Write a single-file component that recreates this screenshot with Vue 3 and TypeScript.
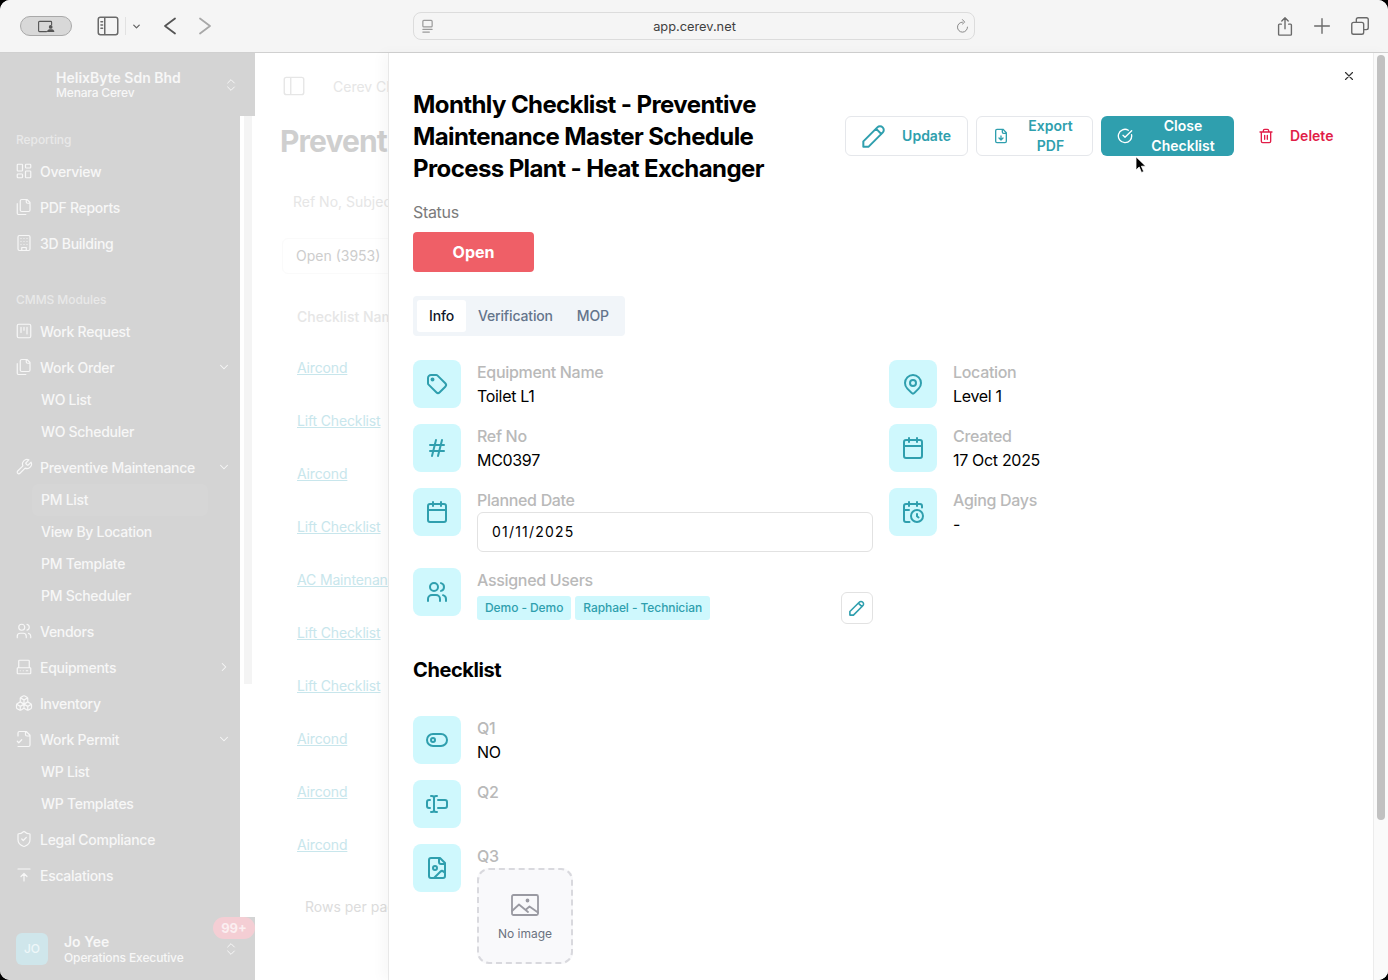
<script setup lang="ts">
type NavItem = {
  label: string
  icon?: string
  sub?: boolean
  active?: boolean
  chevron?: 'down' | 'right'
}

const icons: Record<string, string> = {
  tag: 'M6.5 7.5a1 1 0 1 0 2 0a1 1 0 1 0 -2 0M3 6v5.172a2 2 0 0 0 .586 1.414l7.71 7.71a2.41 2.41 0 0 0 3.408 0l5.592 -5.592a2.41 2.41 0 0 0 0 -3.408l-7.71 -7.71a2 2 0 0 0 -1.414 -.586h-5.172a3 3 0 0 0 -3 3z',
  hash: 'M5 9h14M5 15h14M11 4l-4 16M17 4l-4 16',
  calendar: 'M5 4h14a2 2 0 0 1 2 2v14a2 2 0 0 1-2 2H5a2 2 0 0 1-2-2V6a2 2 0 0 1 2-2zM16 2v4M8 2v4M3 10h18',
  users: 'M5 7a4 4 0 1 0 8 0a4 4 0 1 0 -8 0M3 21v-2a4 4 0 0 1 4 -4h4a4 4 0 0 1 4 4v2M16 3.13a4 4 0 0 1 0 7.75M21 21v-2a4 4 0 0 0 -3 -3.85',
  pin: 'M9 11a3 3 0 1 0 6 0a3 3 0 0 0 -6 0M17.657 16.657l-4.243 4.243a2 2 0 0 1 -2.827 0l-4.244 -4.243a8 8 0 1 1 11.314 0z',
  calendarClock: 'M21 7.5V6a2 2 0 0 0-2-2H5a2 2 0 0 0-2 2v14a2 2 0 0 0 2 2h3.5M16 2v4M8 2v4M3 10h5M17.5 17.5 16 16.3V14M10 16a6 6 0 1 0 12 0a6 6 0 1 0-12 0',
  toggle: 'M8 6h8a6 6 0 0 1 0 12H8A6 6 0 0 1 8 6zM6 12a2 2 0 1 0 4 0a2 2 0 1 0-4 0',
  textCursor: 'M12 20h-1a2 2 0 0 1-2-2 2 2 0 0 1-2 2H6M13 8h7a2 2 0 0 1 2 2v4a2 2 0 0 1-2 2h-7M5 16H4a2 2 0 0 1-2-2v-4a2 2 0 0 1 2-2h1M6 4h1a2 2 0 0 1 2 2 2 2 0 0 1 2-2h1M9 6v12',
  fileImage: 'M15 2H6a2 2 0 0 0-2 2v16a2 2 0 0 0 2 2h12a2 2 0 0 0 2-2V7ZM14 2v4a2 2 0 0 0 2 2h4M8 12a2 2 0 1 0 4 0a2 2 0 1 0-4 0M20 17l-1.296-1.296a2.41 2.41 0 0 0-3.408 0L9 22',
  pencil: 'M4 20h4l10.5 -10.5a2.828 2.828 0 1 0 -4 -4l-10.5 10.5v4M13.5 6.5l4 4',
  fileDown: 'M15 2H6a2 2 0 0 0-2 2v16a2 2 0 0 0 2 2h12a2 2 0 0 0 2-2V7ZM14 2v4a2 2 0 0 0 2 2h4M12 18v-6M9 15l3 3 3-3',
  circleCheck: 'M21.801 10A10 10 0 1 1 17 3.335M9 11l3 3L22 4',
  trash: 'M3 6h18M19 6v14c0 1-1 2-2 2H7c-1 0-2-1-2-2V6M8 6V4c0-1 1-2 2-2h4c1 0 2 1 2 2v2M10 11v6M14 11v6',
  close: 'M18 6 6 18M6 6l12 12',
  upDown: 'M7 15l5 5 5-5M7 9l5-5 5 5',
  down: 'M6 9l6 6 6-6',
  right: 'M9 6l6 6-6 6',
  dashboard: 'M4 3h5a1 1 0 0 1 1 1v7a1 1 0 0 1-1 1H4a1 1 0 0 1-1-1V4a1 1 0 0 1 1-1zM15 3h5a1 1 0 0 1 1 1v3a1 1 0 0 1-1 1h-5a1 1 0 0 1-1-1V4a1 1 0 0 1 1-1zM15 12h5a1 1 0 0 1 1 1v7a1 1 0 0 1-1 1h-5a1 1 0 0 1-1-1v-7a1 1 0 0 1 1-1zM4 16h5a1 1 0 0 1 1 1v3a1 1 0 0 1-1 1H4a1 1 0 0 1-1-1v-3a1 1 0 0 1 1-1z',
  files: 'M20 7h-3a2 2 0 0 1-2-2V2M9 18a2 2 0 0 1-2-2V4a2 2 0 0 1 2-2h7l4 4v10a2 2 0 0 1-2 2ZM3 7.6v12.8A1.6 1.6 0 0 0 4.6 22h9.8',
  building: 'M6 2h12a2 2 0 0 1 2 2v16a2 2 0 0 1-2 2H6a2 2 0 0 1-2-2V4a2 2 0 0 1 2-2zM9 22v-4h6v4M8 6h.01M16 6h.01M12 6h.01M12 10h.01M12 14h.01M16 10h.01M16 14h.01M8 10h.01M8 14h.01',
  kanban: 'M5 3h14a2 2 0 0 1 2 2v14a2 2 0 0 1-2 2H5a2 2 0 0 1-2-2V5a2 2 0 0 1 2-2zM8 7v7M12 7v4M16 7v9',
  wrench: 'M14.7 6.3a1 1 0 0 0 0 1.4l1.6 1.6a1 1 0 0 0 1.4 0l3.77-3.77a6 6 0 0 1-7.94 7.94l-6.91 6.91a2.12 2.12 0 0 1-3-3l6.91-6.91a6 6 0 0 1 7.94-7.94l-3.76 3.76z',
  server: 'M6 3h12a1 1 0 0 1 1 1v9H5V4a1 1 0 0 1 1-1zM4 13h16a1 1 0 0 1 1 1v6a1 1 0 0 1-1 1H4a1 1 0 0 1-1-1v-6a1 1 0 0 1 1-1zM7 17h.01M11 17h.01M15 17h2',
  boxes: 'M2.97 12.92A2 2 0 0 0 2 14.63v3.24a2 2 0 0 0 .97 1.71l3 1.8a2 2 0 0 0 2.06 0L12 19v-5.5l-5-3-4.03 2.42ZM7 16.5l-4.74-2.85M7 16.5l5-3M7 16.5v5.17M12 13.5V19l3.97 2.38a2 2 0 0 0 2.06 0l3-1.8a2 2 0 0 0 .97-1.71v-3.24a2 2 0 0 0-.97-1.71L17 10.5l-5 3ZM17 16.5l-5-3M17 16.5l4.74-2.85M17 16.5v5.17M7.97 4.42A2 2 0 0 0 7 6.13v4.37l5 3 5-3V6.13a2 2 0 0 0-.97-1.71l-3-1.8a2 2 0 0 0-2.06 0l-3 1.8ZM12 8 7.26 5.15M12 8l4.74-2.85M12 13.5V8',
  fileCheck: 'M4 22h14a2 2 0 0 0 2-2V7l-5-5H6a2 2 0 0 0-2 2v4M14 2v4a2 2 0 0 0 2 2h4M3 15l2 2 4-4',
  shield: 'M20 13c0 5-3.5 7.5-7.66 8.95a1 1 0 0 1-.67-.01C7.5 20.5 4 18 4 13V6a1 1 0 0 1 1-1c2 0 4.5-1.2 6.24-2.72a1.17 1.17 0 0 1 1.52 0C14.51 3.81 17 5 19 5a1 1 0 0 1 1 1zM9 12l2 2 4-4',
  arrowTop: 'M12 10v10M12 10l4 4M12 10l-4 4M4 4h16',
  sidebar: 'M5 4h14a2 2 0 0 1 2 2v12a2 2 0 0 1-2 2H5a2 2 0 0 1-2-2V6a2 2 0 0 1 2-2zM9 4v16',
  share: 'M12 15V3M8.5 6.5 12 3l3.5 3.5M8 10H6a1 1 0 0 0-1 1v10a1 1 0 0 0 1 1h12a1 1 0 0 0 1-1V11a1 1 0 0 0-1-1h-2',
  plus: 'M12 4v16M4 12h16',
  tabs: 'M8 8V5a2 2 0 0 1 2-2h9a2 2 0 0 1 2 2v9a2 2 0 0 1-2 2h-3M5 8h9a2 2 0 0 1 2 2v9a2 2 0 0 1-2 2H5a2 2 0 0 1-2-2v-9a2 2 0 0 1 2-2z',
  back: 'M17 4.5 7 12l10 7.5',
  forward: 'M7 4.5 17 12 7 19.5',
  reload: 'M12 5a8 8 0 1 0 8 8M12 1l3.5 4L12 8',
}

const reporting: NavItem[] = [
  { label: 'Overview', icon: 'dashboard' },
  { label: 'PDF Reports', icon: 'files' },
  { label: '3D Building', icon: 'building' },
]

const modules: NavItem[] = [
  { label: 'Work Request', icon: 'kanban' },
  { label: 'Work Order', icon: 'files', chevron: 'down' },
  { label: 'WO List', sub: true },
  { label: 'WO Scheduler', sub: true },
  { label: 'Preventive Maintenance', icon: 'wrench', chevron: 'down' },
  { label: 'PM List', sub: true, active: true },
  { label: 'View By Location', sub: true },
  { label: 'PM Template', sub: true },
  { label: 'PM Scheduler', sub: true },
  { label: 'Vendors', icon: 'users' },
  { label: 'Equipments', icon: 'server', chevron: 'right' },
  { label: 'Inventory', icon: 'boxes' },
  { label: 'Work Permit', icon: 'fileCheck', chevron: 'down' },
  { label: 'WP List', sub: true },
  { label: 'WP Templates', sub: true },
  { label: 'Legal Compliance', icon: 'shield' },
  { label: 'Escalations', icon: 'arrowTop' },
]

const bgRows = [
  'Aircond',
  'Lift Checklist',
  'Aircond',
  'Lift Checklist',
  'AC Maintenance',
  'Lift Checklist',
  'Lift Checklist',
  'Aircond',
  'Aircond',
  'Aircond',
]

const leftInfo = [
  { label: 'Equipment Name', value: 'Toilet L1', icon: 'tag' },
  { label: 'Ref No', value: 'MC0397', icon: 'hash' },
]

const rightInfo = [
  { label: 'Location', value: 'Level 1', icon: 'pin' },
  { label: 'Created', value: '17 Oct 2025', icon: 'calendar' },
  { label: 'Aging Days', value: '-', icon: 'calendarClock' },
]
</script>

<template>
  <div class="window">
    <header class="toolbar">
      <div class="toolbar-left">
        <div class="profile-pill">
          <svg viewBox="0 0 20 14" class="pill-icon">
            <path d="M10 12.5H2.5a1 1 0 0 1-1-1v-9a1 1 0 0 1 1-1h12a1 1 0 0 1 1 1V5" fill="none" stroke="#555" stroke-width="1.2" />
            <circle cx="14.5" cy="7.5" r="2" fill="#555" />
            <path d="M10.5 13c0-2.4 1.8-3 4-3s4 .6 4 3z" fill="#555" />
          </svg>
        </div>
        <svg class="tb-icon sidebar-toggle" viewBox="0 0 24 24">
          <path :d="icons.sidebar" />
          <path d="M5.5 8h1.5M5.5 11h1.5M5.5 14h1.5" />
        </svg>
        <span class="tb-divider"></span>
        <svg class="tb-chev" viewBox="0 0 24 24"><path :d="icons.down" /></svg>
        <svg class="tb-nav" viewBox="0 0 24 24"><path :d="icons.back" /></svg>
        <svg class="tb-nav tb-nav--off" viewBox="0 0 24 24"><path :d="icons.forward" /></svg>
      </div>
      <div class="url-bar">
        <svg class="url-icon" viewBox="0 0 14 16">
          <path d="M3 1.5h8a1 1 0 0 1 1 1v5a1 1 0 0 1-1 1H3a1 1 0 0 1-1-1v-5a1 1 0 0 1 1-1zM2 11h10M2 14h7" />
        </svg>
        <span class="url-text">app.cerev.net</span>
        <svg class="url-reload" viewBox="0 0 24 24"><path :d="icons.reload" /></svg>
      </div>
      <div class="toolbar-right">
        <svg class="tb-action tb-action--share" viewBox="0 0 24 24"><path :d="icons.share" /></svg>
        <svg class="tb-action" viewBox="0 0 24 24"><path :d="icons.plus" /></svg>
        <svg class="tb-action" viewBox="0 0 24 24"><path :d="icons.tabs" /></svg>
      </div>
    </header>

    <div class="body">
      <aside class="sidebar">
        <div class="org">
          <div class="org-copy">
            <strong>HelixByte Sdn Bhd</strong>
            <span>Menara Cerev</span>
          </div>
          <svg class="updown" viewBox="0 0 24 24"><path :d="icons.upDown" /></svg>
        </div>

        <div class="side-mid">
          <nav class="nav">
            <p class="nav-group">Reporting</p>
            <a v-for="item in reporting" :key="item.label" class="nav-item">
              <svg class="nav-icon" viewBox="0 0 24 24"><path :d="icons[item.icon!]" /></svg>
              {{ item.label }}
            </a>
            <p class="nav-group nav-group--gap">CMMS Modules</p>
            <a
              v-for="item in modules"
              :key="item.label"
              :class="['nav-item', { 'nav-item--sub': item.sub, 'nav-item--active': item.active }]"
            >
              <svg v-if="item.icon" class="nav-icon" viewBox="0 0 24 24"><path :d="icons[item.icon]" /></svg>
              <span class="nav-label">{{ item.label }}</span>
              <svg v-if="item.chevron" class="nav-chev" viewBox="0 0 24 24"><path :d="icons[item.chevron]" /></svg>
            </a>
          </nav>
          <div class="side-track"><div class="side-thumb"></div></div>
        </div>

        <div class="user">
          <div class="avatar">JO</div>
          <div class="user-copy">
            <strong>Jo Yee</strong>
            <span>Operations Executive</span>
          </div>
          <svg class="updown" viewBox="0 0 24 24"><path :d="icons.upDown" /></svg>
          <span class="badge">99+</span>
        </div>
      </aside>

      <main class="behind">
        <div class="crumbs">
          <svg class="crumb-icon" viewBox="0 0 24 24"><path :d="icons.sidebar" /></svg>
          <span>Cerev Checklist</span>
        </div>
        <h1 class="behind-title">Preventive Maintenance</h1>
        <p class="behind-search">Ref No, Subject</p>
        <div class="behind-tab">Open (3953)</div>
        <p class="behind-head">Checklist Name</p>
        <a v-for="(row, i) in bgRows" :key="i" class="behind-row">{{ row }}</a>
        <p class="behind-foot">Rows per page</p>
      </main>

      <section class="drawer">
        <div class="drawer-scroll">
          <svg class="drawer-close" viewBox="0 0 24 24"><path :d="icons.close" /></svg>

          <div class="head">
            <h2 class="title">Monthly Checklist - Preventive Maintenance Master Schedule Process Plant - Heat Exchanger</h2>
            <div class="actions">
              <button class="btn btn--outline">
                <svg class="btn-icon-lg" viewBox="3 3 18 18"><path :d="icons.pencil" /></svg>
                <span>Update</span>
              </button>
              <button class="btn btn--outline btn--export">
                <svg viewBox="0 0 24 24"><path :d="icons.fileDown" /></svg>
                <span>Export PDF</span>
              </button>
              <button class="btn btn--solid">
                <svg viewBox="0 0 24 24"><path :d="icons.circleCheck" /></svg>
                <span>Close Checklist</span>
              </button>
              <button class="btn btn--danger">
                <svg viewBox="0 0 24 24"><path :d="icons.trash" /></svg>
                <span>Delete</span>
              </button>
            </div>
          </div>

          <p class="status-label">Status</p>
          <div class="status">Open</div>

          <div class="tabs">
            <span class="tab tab--active">Info</span>
            <span class="tab">Verification</span>
            <span class="tab">MOP</span>
          </div>

          <div class="info-grid">
            <div class="info-col">
              <div v-for="row in leftInfo" :key="row.label" class="info">
                <div class="info-icon"><svg viewBox="0 0 24 24"><path :d="icons[row.icon]" /></svg></div>
                <div class="info-copy">
                  <div class="info-label">{{ row.label }}</div>
                  <div class="info-value">{{ row.value }}</div>
                </div>
              </div>
              <div class="info">
                <div class="info-icon"><svg viewBox="0 0 24 24"><path :d="icons.calendar" /></svg></div>
                <div class="info-copy">
                  <div class="info-label">Planned Date</div>
                  <input class="date-input" type="text" value="01/11/2025" readonly />
                </div>
              </div>
              <div class="info">
                <div class="info-icon"><svg viewBox="0 0 24 24"><path :d="icons.users" /></svg></div>
                <div class="info-copy">
                  <div class="info-label">Assigned Users</div>
                  <div class="chips-row">
                    <div class="chips">
                      <span class="chip">Demo - Demo</span>
                      <span class="chip">Raphael - Technician</span>
                    </div>
                    <button class="edit-btn">
                      <svg viewBox="3 3 18 18"><path :d="icons.pencil" /></svg>
                    </button>
                  </div>
                </div>
              </div>
            </div>
            <div class="info-col">
              <div v-for="row in rightInfo" :key="row.label" class="info">
                <div class="info-icon"><svg viewBox="0 0 24 24"><path :d="icons[row.icon]" /></svg></div>
                <div class="info-copy">
                  <div class="info-label">{{ row.label }}</div>
                  <div class="info-value">{{ row.value }}</div>
                </div>
              </div>
            </div>
          </div>

          <h3 class="section-title">Checklist</h3>

          <div class="questions">
            <div class="info">
              <div class="info-icon"><svg viewBox="0 0 24 24"><path :d="icons.toggle" /></svg></div>
              <div class="info-copy">
                <div class="info-label">Q1</div>
                <div class="info-value">NO</div>
              </div>
            </div>
            <div class="info">
              <div class="info-icon"><svg viewBox="0 0 24 24"><path :d="icons.textCursor" /></svg></div>
              <div class="info-copy">
                <div class="info-label">Q2</div>
              </div>
            </div>
            <div class="info">
              <div class="info-icon"><svg viewBox="0 0 24 24"><path :d="icons.fileImage" /></svg></div>
              <div class="info-copy">
                <div class="info-label">Q3</div>
                <div class="no-image">
                  <svg viewBox="0 0 28 22">
                    <path d="M2.5 1h23a1.5 1.5 0 0 1 1.5 1.5v17a1.5 1.5 0 0 1-1.5 1.5h-23A1.5 1.5 0 0 1 1 19.5v-17A1.5 1.5 0 0 1 2.5 1z" />
                    <path d="M1 17l7-6.5 9 7.5M15 15.5l3.5-3 8.5 6" />
                    <circle cx="16.5" cy="6.5" r="1" />
                  </svg>
                  <span>No image</span>
                </div>
              </div>
            </div>
          </div>
        </div>
        <div class="drawer-track"><div class="drawer-thumb"></div></div>
      </section>
    </div>

    <svg class="cursor" viewBox="0 0 12 18">
      <path d="M1 1v13l3.2-3 2.3 5.5 2.2-1-2.3-5.3H10.5z" fill="#000" stroke="#fff" stroke-width="0.8" />
    </svg>
  </div>
</template>

<style>
html,
body {
  margin: 0;
  height: 100%;
  overflow: hidden;
  background: #000;
}
</style>

<style scoped>
.window {
  position: relative;
  display: flex;
  flex-direction: column;
  width: 1388px;
  height: 980px;
  overflow: hidden;
  border-radius: 10px;
  background: #fff;
  color: #000;
  font-family: Inter, 'Liberation Sans', sans-serif;
  box-sizing: border-box;
}

svg {
  fill: none;
  stroke: currentColor;
  stroke-width: 2;
  stroke-linecap: round;
  stroke-linejoin: round;
  flex: 0 0 auto;
}

/* browser chrome */
.toolbar {
  flex: 0 0 auto;
  display: flex;
  align-items: center;
  height: 52px;
  background: #f5f5f5;
  border-bottom: 1px solid #d0d0d0;
}

.toolbar-left {
  display: flex;
  align-items: center;
  width: 413px;
  padding-left: 20px;
  box-sizing: border-box;
}

.profile-pill {
  display: flex;
  align-items: center;
  justify-content: center;
  width: 52px;
  height: 20px;
  border: 1px solid #a9a9a9;
  border-radius: 10px;
  background: #d8d8d8;
  box-sizing: border-box;
}

.pill-icon {
  width: 19px;
  height: 13px;
  stroke: none;
}

.tb-icon {
  width: 26px;
  height: 26px;
  color: #6a6a6a;
  stroke-width: 1.4;
}

.sidebar-toggle {
  margin-left: 23px;
}

.tb-divider {
  width: 1px;
  height: 18px;
  margin-left: 4px;
  background: #e2e2e2;
}

.tb-chev {
  width: 11px;
  height: 11px;
  margin-left: 5px;
  color: #666;
  stroke-width: 3;
}

.tb-nav {
  width: 24px;
  height: 24px;
  margin-left: 16px;
  color: #555;
  stroke-width: 1.8;
}

.tb-nav--off {
  margin-left: 11px;
  color: #a8a8a8;
}

.url-bar {
  display: flex;
  align-items: center;
  justify-content: space-between;
  width: 562px;
  height: 28px;
  padding: 0 4px 0 7px;
  border: 1px solid #dcdcdc;
  border-radius: 8px;
  background: #f5f5f5;
  box-sizing: border-box;
}

.url-icon {
  width: 13px;
  height: 15px;
  color: #9a9a9a;
  stroke-width: 1.3;
}

.url-text {
  padding-top: 1px;
  font-size: 12.8px;
  color: #3f3f3f;
}

.url-reload {
  width: 15px;
  height: 15px;
  color: #8a8a8a;
  stroke-width: 1.6;
}

.toolbar-right {
  flex: 1;
  display: flex;
  align-items: center;
  justify-content: flex-end;
  gap: 16px;
  padding-right: 17px;
}

.tb-action {
  width: 22px;
  height: 22px;
  color: #6a6a6a;
  stroke-width: 1.5;
}

.tb-action--share {
  margin-right: -1px;
}

/* page */
.body {
  flex: 1;
  display: flex;
  min-height: 0;
}

.sidebar {
  flex: 0 0 255px;
  display: flex;
  flex-direction: column;
  color: #f7f7f7;
}

.org {
  flex: 0 0 63px;
  display: flex;
  align-items: center;
  justify-content: space-between;
  padding: 0 16px 0 56px;
  background: #d4d4d4;
  box-sizing: border-box;
}

.org-copy {
  display: flex;
  flex-direction: column;
}

.org-copy strong {
  font-size: 14px;
  font-weight: 600;
  line-height: 16px;
}

.org-copy span {
  font-size: 12px;
  font-weight: 500;
  line-height: 14px;
  letter-spacing: -0.015em;
}

.updown {
  width: 16px;
  height: 16px;
  stroke-width: 1.5;
}

.side-mid {
  flex: 1;
  display: flex;
  min-height: 0;
}

.nav {
  flex: 0 0 240px;
  padding: 8px 8px 0;
  background: #d4d4d4;
  box-sizing: border-box;
}

.nav-group {
  margin: 0;
  padding-left: 8px;
  height: 32px;
  font-size: 12px;
  font-weight: 500;
  line-height: 32px;
  letter-spacing: -0.005em;
  color: #e9e9e9;
}

.nav-group--gap {
  margin-top: 24px;
}

.nav-item {
  display: flex;
  align-items: center;
  gap: 7px;
  height: 32px;
  margin-top: 4px;
  padding: 0 1px 2px 7px;
  font-size: 14px;
  font-weight: 500;
  letter-spacing: -0.02em;
  white-space: nowrap;
  box-sizing: border-box;
}

.nav-group + .nav-item {
  margin-top: 0;
}

.nav-item--sub {
  margin-top: 0;
  padding-left: 33px;
}

.nav-item--active {
  margin: 0 24px;
  padding-left: 9px;
  background: #d6d6d6;
  border-radius: 6px;
}

.nav-label {
  flex: 1;
}

.nav-icon {
  width: 18px;
  height: 18px;
  stroke-width: 1.6;
}

.nav-chev {
  width: 14px;
  height: 14px;
  stroke-width: 1.8;
}

.side-track {
  flex: 0 0 15px;
  padding-left: 4px;
  background: #fff;
  box-sizing: border-box;
}

.side-thumb {
  width: 8px;
  height: 568px;
  background: #f4f4f4;
}

.user {
  position: relative;
  flex: 0 0 63px;
  display: flex;
  align-items: center;
  gap: 16px;
  padding: 0 16px;
  background: #d4d4d4;
  box-sizing: border-box;
}

.avatar {
  flex: 0 0 32px;
  height: 32px;
  border-radius: 6px;
  background: #cfe6eb;
  font-size: 12px;
  font-weight: 500;
  line-height: 32px;
  text-align: center;
  color: #eef7f9;
}

.user-copy {
  flex: 1;
  display: flex;
  flex-direction: column;
  white-space: nowrap;
}

.user-copy strong {
  font-size: 14px;
  font-weight: 600;
  line-height: 17px;
}

.user-copy span {
  font-size: 12px;
  font-weight: 500;
  line-height: 15px;
  letter-spacing: -0.01em;
}

.badge {
  position: absolute;
  top: 0;
  right: 0;
  width: 42px;
  height: 22px;
  border-radius: 11px;
  background: #f4ced4;
  font-size: 13px;
  font-weight: 700;
  line-height: 22px;
  text-align: center;
  color: #fbeff1;
}

/* dimmed page behind the drawer */
.behind {
  flex: 0 0 133px;
  min-width: 0;
  padding-top: 23px;
  overflow: hidden;
  white-space: nowrap;
  background: #fff;
  font-size: 14px;
  color: #e6e6e6;
}

.crumbs {
  display: flex;
  align-items: center;
  gap: 26px;
  height: 20px;
  padding-left: 26px;
  font-size: 14px;
}

.crumb-icon {
  width: 26px;
  height: 26px;
  stroke-width: 1.3;
}

.behind-title {
  margin: 27px 0 0 25px;
  font-size: 30px;
  font-weight: 700;
  line-height: 36px;
  letter-spacing: -0.03em;
  color: #cfcfcf;
}

.behind-search {
  margin: 33px 0 0 38px;
  line-height: 20px;
}

.behind-tab {
  width: 120px;
  height: 36px;
  margin: 26px 0 0 27px;
  padding-left: 13px;
  border: 1px solid #fafafa;
  border-radius: 6px;
  line-height: 34px;
  color: #cdcdcd;
  box-sizing: border-box;
}

.behind-head {
  margin: 33px 0 0 42px;
  font-weight: 500;
  line-height: 20px;
}

.behind-row {
  display: block;
  height: 53px;
  margin-left: 42px;
  line-height: 20px;
  letter-spacing: -0.15px;
  text-decoration: underline;
  color: #c8e6ec;
}

.behind-head + .behind-row {
  margin-top: 31px;
}

.behind-foot {
  margin: 9px 0 0 50px;
  line-height: 20px;
  color: #dcdcdc;
}

/* drawer */
.drawer {
  flex: 0 0 1000px;
  display: flex;
  min-width: 0;
  border-left: 1px solid #e8e8e8;
  background: #fff;
  box-shadow: -6px 0 12px rgba(0, 0, 0, 0.03);
  box-sizing: border-box;
}

.drawer-scroll {
  position: relative;
  flex: 1;
  min-width: 0;
  padding: 36px 32px 0 24px;
  overflow: hidden;
  box-sizing: border-box;
}

.drawer-close {
  position: absolute;
  top: 16px;
  right: 17px;
  width: 14px;
  height: 14px;
  color: #333;
}

.head {
  display: flex;
  align-items: center;
  justify-content: space-between;
}

.title {
  width: 420px;
  margin: 0;
  font-size: 24px;
  font-weight: 700;
  line-height: 32px;
  letter-spacing: -0.025em;
}

.actions {
  display: flex;
  gap: 8px;
  margin-bottom: 2px;
}

.btn {
  display: flex;
  align-items: center;
  gap: 16px;
  height: 40px;
  padding: 0 16px;
  border: 1px solid transparent;
  border-radius: 6px;
  background: transparent;
  font: inherit;
  font-size: 14px;
  font-weight: 600;
  line-height: 20px;
  box-sizing: border-box;
}

.btn span {
  flex: 1;
  text-align: center;
}

.btn svg {
  width: 16px;
  height: 16px;
}

.btn svg.btn-icon-lg {
  width: 24px;
  height: 24px;
  stroke-width: 1.5;
}

.btn--outline {
  border-color: #e5e7eb;
  color: #2f9fae;
}

.btn--export {
  width: 117px;
}

.btn--solid {
  width: 133px;
  padding-left: 15px;
  background: #2f9fae;
  color: #fff;
}

.btn--danger {
  width: 99px;
  padding: 0 8px 0 15px;
  color: #e11d48;
}

.status-label {
  margin: 17px 0 10px;
  font-size: 16px;
  line-height: 20px;
  letter-spacing: -0.02em;
  color: #7b7b7b;
}

.status {
  width: 121px;
  height: 40px;
  border-radius: 4px;
  background: #ef5f67;
  font-size: 16px;
  font-weight: 700;
  line-height: 40px;
  text-align: center;
  color: #fff;
}

.tabs {
  display: flex;
  width: fit-content;
  height: 40px;
  margin-top: 24px;
  padding: 4px;
  border-radius: 4px;
  background: #f1f5f9;
  letter-spacing: -0.01em;
  box-sizing: border-box;
}

.tab {
  padding: 0 12px;
  font-size: 14px;
  font-weight: 500;
  line-height: 32px;
  color: #64748b;
}

.tab--active {
  border-radius: 3px;
  background: #fff;
  color: #0f172a;
}

.info-grid {
  display: grid;
  grid-template-columns: 460px 1fr;
  gap: 16px;
  margin-top: 24px;
}

.info-col,
.questions {
  display: flex;
  flex-direction: column;
  gap: 16px;
}

.info {
  display: flex;
  gap: 16px;
}

.info-icon {
  flex: 0 0 48px;
  display: flex;
  align-items: center;
  justify-content: center;
  height: 48px;
  border-radius: 8px;
  background: #cff8fd;
  color: #2f9fae;
}

.info-icon svg {
  width: 24px;
  height: 24px;
  stroke-width: 2;
}

.info-copy {
  flex: 1;
  min-width: 0;
}

.info-label {
  font-size: 16px;
  font-weight: 500;
  line-height: 24px;
  letter-spacing: -0.02em;
  color: #b9b9b9;
}

.info-value {
  font-size: 16px;
  line-height: 24px;
  letter-spacing: -0.02em;
  color: #000;
}

.date-input {
  display: block;
  width: 100%;
  height: 40px;
  padding: 0 14px 1px;
  border: 1px solid #e2e2e2;
  border-radius: 6px;
  outline: 0;
  font: inherit;
  font-size: 14px;
  letter-spacing: 1.2px;
  color: #000;
  box-sizing: border-box;
}

.chips-row {
  display: flex;
  align-items: center;
  justify-content: space-between;
}

.chips {
  display: flex;
  gap: 4px;
}

.chip {
  height: 24px;
  padding: 0 8px;
  border-radius: 3px;
  background: #cff8fd;
  font-size: 12px;
  font-weight: 500;
  line-height: 24px;
  letter-spacing: -0.08px;
  color: #2f9fae;
}

.edit-btn {
  display: flex;
  align-items: center;
  justify-content: center;
  width: 32px;
  height: 32px;
  padding: 0;
  border: 1px solid #e2e2e2;
  border-radius: 6px;
  background: #fff;
  color: #2f9fae;
}

.edit-btn svg {
  width: 16px;
  height: 16px;
  stroke-width: 1.8;
}

.section-title {
  margin: 32px 0 32px;
  font-size: 20px;
  font-weight: 700;
  line-height: 28px;
  letter-spacing: -0.02em;
}

.no-image {
  display: flex;
  flex-direction: column;
  align-items: center;
  justify-content: center;
  gap: 10px;
  width: 96px;
  height: 96px;
  padding-top: 3px;
  border: 2px dashed #d9d9de;
  border-radius: 12px;
  background: #f9f9fb;
  font-size: 12px;
  color: #6b7280;
  box-sizing: border-box;
}

.no-image svg {
  width: 28px;
  height: 22px;
  color: #9a9aa2;
  stroke-width: 1.8;
}

.drawer-track {
  flex: 0 0 15px;
  padding: 2px 3px 0;
  border-left: 1px solid #ececec;
  background: #fafafa;
  box-sizing: border-box;
}

.drawer-thumb {
  height: 765px;
  border-radius: 4px;
  background: #c1c1c1;
}

/* mouse pointer in the capture */
.cursor {
  position: absolute;
  top: 156px;
  left: 1135px;
  width: 12px;
  height: 18px;
  stroke: none;
}
</style>
